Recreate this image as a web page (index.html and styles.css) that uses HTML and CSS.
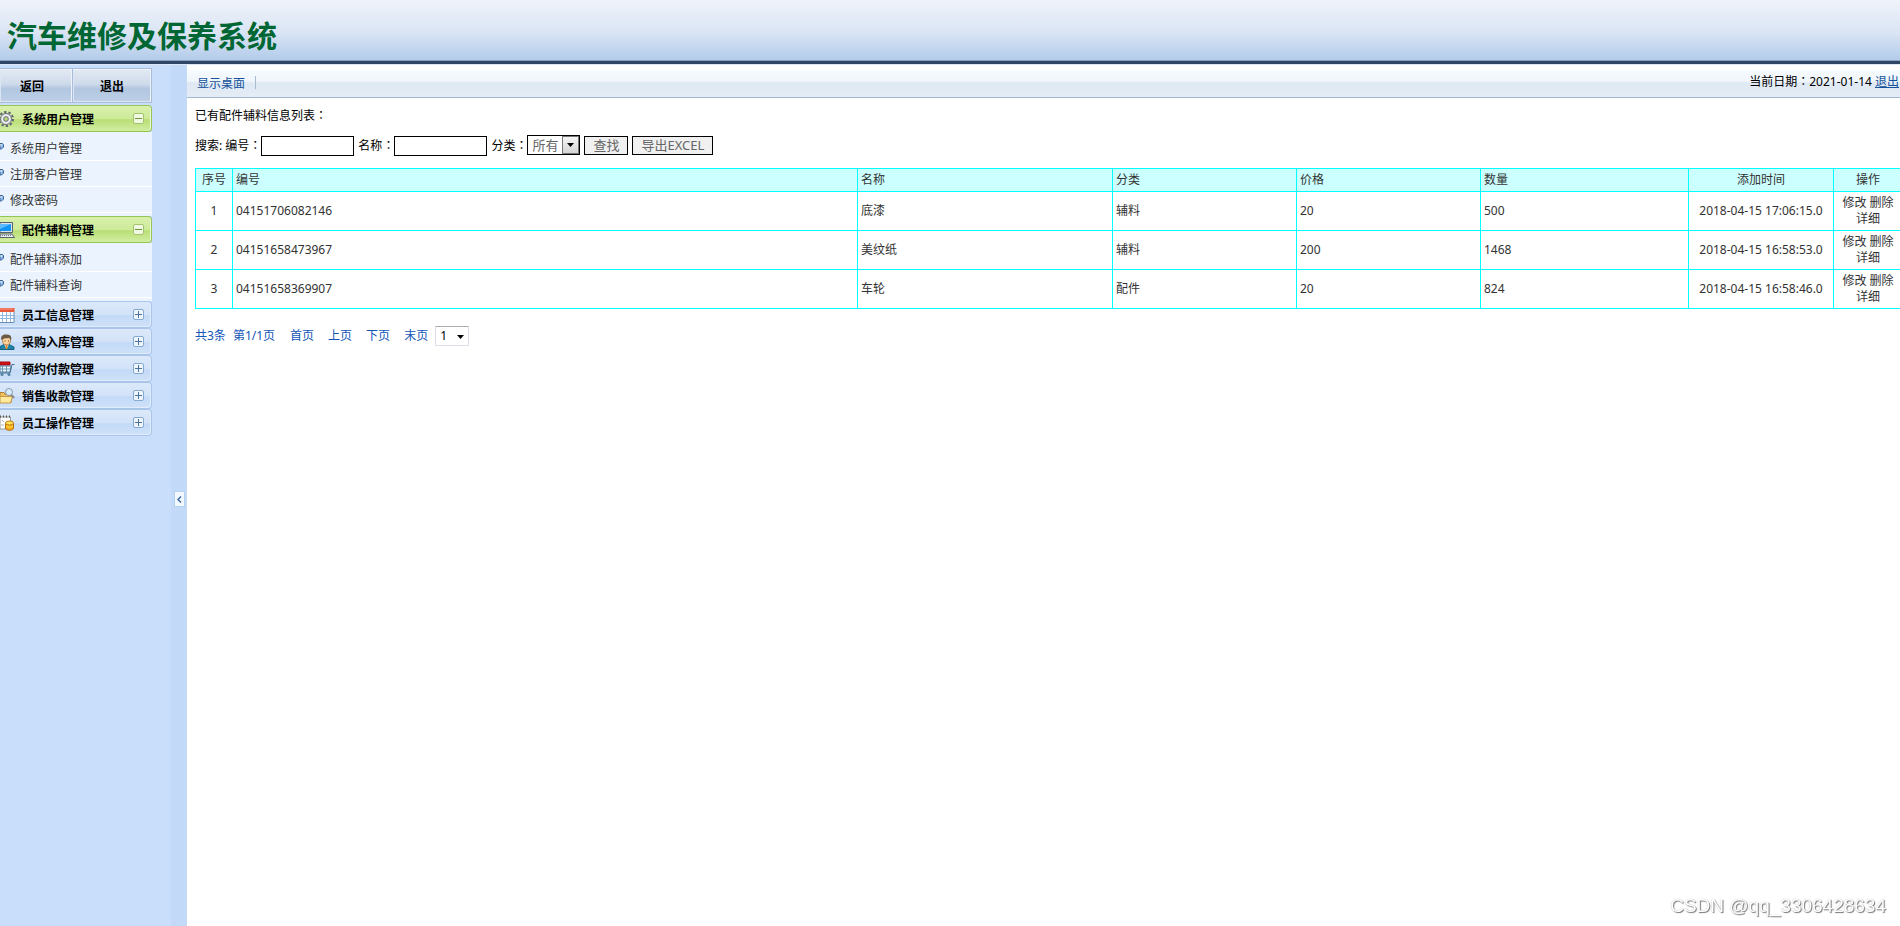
FILE: index.html
```html
<!DOCTYPE html>
<html lang="zh-CN">
<head>
<meta charset="utf-8">
<title>汽车维修及保养系统</title>
<link rel="stylesheet" href="styles.css">
</head>
<body>
<svg class="defs" aria-hidden="true">
  <symbol id="minus" viewBox="0 0 11 11"><rect x=".5" y=".5" width="10" height="10" rx="1.5" fill="#f2f9e2" stroke="#a3c46c"/><path d="M2 5.5h7" stroke="#6f9440"/></symbol>
  <symbol id="plus" viewBox="0 0 11 11"><rect x=".5" y=".5" width="10" height="10" rx="1.5" fill="#eef5fd" stroke="#86a9d0"/><path d="M2 5.5h7M5.5 2v7" stroke="#4d7299"/></symbol>
  <symbol id="bullet" viewBox="0 0 4 7"><path d="M0 .5h2.500l1 1v2.500l-2 2H0z" fill="#8fb8ee" stroke="#3c6493"/><path d="M0 2h2" stroke="#fff"/></symbol>
</svg>
<header class="banner"><h1 class="banner-title">汽车维修及保养系统</h1></header>
<div class="layout">
  <aside class="sidebar">
    <div class="top-buttons">
      <button class="top-button" type="button">返回</button>
      <button class="top-button" type="button">退出</button>
    </div>
    <nav class="menu">
      <section class="group open">
        <button class="group-head" type="button">
          <svg class="group-icon" viewBox="0 0 15 16"><circle cx="6" cy="8" r="7" fill="none" stroke="#62666e" stroke-width="2" stroke-dasharray="2.400 2"/><circle cx="6" cy="8" r="5.500" fill="#d9dce1" stroke="#6d717a"/><circle cx="6" cy="8" r="4" fill="none" stroke="#f4f5f7"/><circle cx="6" cy="8" r="2.300" fill="#b9dd79" stroke="#6c7078"/></svg>
          <span class="group-name">系统用户管理</span><svg class="toggle"><use href="#minus"/></svg>
        </button>
        <ul class="items">
          <li><a href="#"><svg class="bullet"><use href="#bullet"/></svg>系统用户管理</a></li>
          <li><a href="#"><svg class="bullet"><use href="#bullet"/></svg>注册客户管理</a></li>
          <li><a href="#"><svg class="bullet"><use href="#bullet"/></svg>修改密码</a></li>
        </ul>
      </section>
      <section class="group open">
        <button class="group-head" type="button">
          <svg class="group-icon" viewBox="0 0 15 16"><path d="M0 .5h12.500v10H0z" fill="#dfe3ea" stroke="#566273"/><path d="M0 2h11v7H0z" fill="#1294f5"/><path d="M0 2h11L0 7z" fill="#5cbcff"/><path d="M0 12h12l2.500 3.500H0z" fill="#e8ebf0" stroke="#59626e"/><path d="M0 13.500h12" stroke="#77818e" stroke-dasharray="1 1"/></svg>
          <span class="group-name">配件辅料管理</span><svg class="toggle"><use href="#minus"/></svg>
        </button>
        <ul class="items">
          <li><a href="#"><svg class="bullet"><use href="#bullet"/></svg>配件辅料添加</a></li>
          <li><a href="#"><svg class="bullet"><use href="#bullet"/></svg>配件辅料查询</a></li>
        </ul>
      </section>
      <section class="group">
        <button class="group-head" type="button">
          <svg class="group-icon" viewBox="0 0 15 16"><path d="M0 1h14v14H0z" fill="#fff"/><path d="M0 1h14.500v4H0z" fill="#e8583c"/><path d="M0 2h13" stroke="#f79a82"/><path d="M0 8.500h14M0 11.500h14M2.500 5v10M6.500 5v10M10.500 5v10" stroke="#91b9e2"/><path d="M14 5v10.500H0" fill="none" stroke="#6b8db4"/></svg>
          <span class="group-name">员工信息管理</span><svg class="toggle"><use href="#plus"/></svg>
        </button>
      </section>
      <section class="group">
        <button class="group-head" type="button">
          <svg class="group-icon" viewBox="0 0 15 16"><path d="M0 15.500v-3l4-2h5l5 2.500v2.500z" fill="#1e83a8" stroke="#176280"/><path d="M4 10l2.500 5L9 10z" fill="#fff"/><path d="M6.500 11v4" stroke="#e28a28" stroke-width="2"/><ellipse cx="6.500" cy="6.500" rx="4" ry="4.500" fill="#ffd49b" stroke="#b77f43"/><path d="M1.500 6C0 1 4 0 7 .5c4 0 5 3 4 6L9.500 4 4 4.500z" fill="#6a5a46"/><path d="M4.500 7h1M8 7h1" stroke="#543"/></svg>
          <span class="group-name">采购入库管理</span><svg class="toggle"><use href="#plus"/></svg>
        </button>
      </section>
      <section class="group">
        <button class="group-head" type="button">
          <svg class="group-icon" viewBox="0 0 15 16"><path d="M0 1h10v3H0z" fill="#d90d17" stroke="#a40c12"/><path d="M0 5h11l-1 6H0z" fill="#f3f8fc" stroke="#527fa2"/><path d="M0 8h10M2.500 5v6M6.500 5v6" stroke="#6795b5"/><path d="M14.500 3.500H12L10 12H0" fill="none" stroke="#476f91"/><circle cx="2" cy="13.500" r="1.500" fill="#5482a5"/><circle cx="9" cy="13.500" r="1.500" fill="#5482a5"/></svg>
          <span class="group-name">预约付款管理</span><svg class="toggle"><use href="#plus"/></svg>
        </button>
      </section>
      <section class="group">
        <button class="group-head" type="button">
          <svg class="group-icon" viewBox="0 0 15 16"><path d="M0 4.500h4l1 2h6v8H0z" fill="#f2c363" stroke="#b28031"/><path d="M0 8.500h12.500l-2 6.500H0z" fill="#ffe99c" stroke="#c79742"/><circle cx="9" cy="4" r="3.500" fill="#d7edfb" stroke="#8599ab"/><path d="M11.500 7l2.500 3" stroke="#8c8a88" stroke-width="2"/></svg>
          <span class="group-name">销售收款管理</span><svg class="toggle"><use href="#plus"/></svg>
        </button>
      </section>
      <section class="group">
        <button class="group-head" type="button">
          <svg class="group-icon" viewBox="0 0 15 16"><path d="M0 2h10.500v12H0z" fill="#fff" stroke="#999"/><path d="M0 1.500h11" stroke="#555" stroke-width="2" stroke-dasharray="1 2"/><path d="M2 5l2 2M1 10h3" stroke="#b3b3b3"/><path d="M5.500 8v5c0 3 8 3 8 0V8z" fill="#f6ac16" stroke="#b86d0c"/><ellipse cx="9.500" cy="8" rx="4" ry="2" fill="#ffe357" stroke="#c27b12"/><path d="M6 11c2 1.500 5 1.500 7 0" fill="none" stroke="#ffe357"/></svg>
          <span class="group-name">员工操作管理</span><svg class="toggle"><use href="#plus"/></svg>
        </button>
      </section>
    </nav>
  </aside>
  <div class="splitter">
    <button class="collapse" type="button" aria-label="收起"><svg viewBox="0 0 5 7"><path d="M4 .5l-3 3 3 3" fill="none" stroke="#3c6a9c" stroke-width="1.500"/></svg></button>
  </div>
  <main class="main">
    <div class="toolbar">
      <a class="desktop" href="#">显示桌面</a>
      <div class="session">当前日期<span class="colon" lang="zh-TW">：</span>2021-01-14 <a class="logout" href="#">退出</a></div>
    </div>
    <div class="content">
      <p class="caption">已有配件辅料信息列表<span class="colon" lang="zh-TW">：</span></p>
      <form class="search">
        <label for="code">搜索: 编号<span class="colon" lang="zh-TW">：</span></label><input class="field" id="code" type="text">
        <label class="next" for="name">名称<span class="colon" lang="zh-TW">：</span></label><input class="field" id="name" type="text">
        <label class="next" for="kind">分类<span class="colon" lang="zh-TW">：</span></label>
        <span class="kind"><select id="kind"><option>所有</option></select><span class="drop"><svg viewBox="0 0 7 4"><path d="M0 0h7L3.500 4z"/></svg></span></span>
        <button class="action" type="button">查找</button>
        <button class="action" type="button">导出EXCEL</button>
      </form>
      <table class="parts">
        <colgroup><col class="c-no"><col><col class="c-name"><col class="c-mid"><col class="c-mid"><col class="c-qty"><col class="c-time"><col class="c-ops"></colgroup>
        <thead><tr><th class="mid">序号</th><th>编号</th><th>名称</th><th>分类</th><th>价格</th><th>数量</th><th class="mid">添加时间</th><th class="mid">操作</th></tr></thead>
        <tbody>
          <tr><td class="mid">1</td><td>04151706082146</td><td>底漆</td><td>辅料</td><td>20</td><td>500</td><td class="mid">2018-04-15 17:06:15.0</td><td class="mid"><a href="#">修改</a> <a href="#">删除</a> <a href="#">详细</a></td></tr>
          <tr><td class="mid">2</td><td>04151658473967</td><td>美纹纸</td><td>辅料</td><td>200</td><td>1468</td><td class="mid">2018-04-15 16:58:53.0</td><td class="mid"><a href="#">修改</a> <a href="#">删除</a> <a href="#">详细</a></td></tr>
          <tr><td class="mid">3</td><td>04151658369907</td><td>车轮</td><td>配件</td><td>20</td><td>824</td><td class="mid">2018-04-15 16:58:46.0</td><td class="mid"><a href="#">修改</a> <a href="#">删除</a> <a href="#">详细</a></td></tr>
        </tbody>
      </table>
      <div class="pager">
        <span class="total">共3条</span><span>第1/1页</span>
        <a href="#">首页</a><a href="#">上页</a><a href="#">下页</a><a href="#">末页</a>
        <span class="jump"><select aria-label="页码"><option>1</option></select><svg viewBox="0 0 7 4"><path d="M0 0h7L3.500 4z"/></svg></span>
      </div>
    </div>
  </main>
</div>
<div class="watermark">CSDN @qq_3306428634</div>
</body>
</html>
```
FILE: styles.css
```css
* { box-sizing: border-box; }
body {
  margin: 0;
  height: 100vh;
  display: flex;
  flex-direction: column;
  overflow: hidden;
  background: #fff;
  color: #000;
  font: 12px/16px "Noto Sans", "Noto Sans CJK SC", sans-serif;
}
button, input, select { font: inherit; margin: 0; border-radius: 0; }
a { color: inherit; text-decoration: none; }
.defs { display: none; }

.banner {
  flex: none;
  height: 65px;
  padding: 16px 7px 0;
  background: linear-gradient(#eff3fa, #dbe5f5 50%, #adc8e8);
  border-bottom: 1px solid #dbe7f7;
  box-shadow: inset 0 -3px #2f4566, inset 0 -4px #8aa0be;
}
.banner-title { margin: 0; font-size: 30px; line-height: 40px; color: #063; }

.layout { flex: 1; display: flex; min-height: 0; }
.sidebar { flex: none; width: 171px; padding: 3px 19px 0 0; background: #c9defa; }
.top-buttons { display: grid; grid-template-columns: 73px 1fr; height: 35px; }
.top-button {
  padding: 3px 0 0;
  border: 1px solid #a9bdd8;
  border-left: 0;
  box-shadow: inset -1px 1px #eef3fa, inset 1px -1px #dce6f3;
  background: linear-gradient(#e3eaf4, #cfdbeb 45%, #b1c6e1 60%, #bfd0e7);
  font-weight: bold;
}
.top-button:first-child { padding-right: 8px; }
.menu { padding-top: 2px; }
.group-head {
  display: flex;
  align-items: center;
  width: 100%;
  height: 27px;
  padding: 2px 7px 0 0;
  border: 1px solid #a9c6ea;
  border-left: 0;
  border-radius: 0 4px 4px 0;
  background: linear-gradient(#dce9fa, #d2e2f8 50%, #c3daf7 55%, #cfe1f9);
  box-shadow: inset -1px -1px #e0ecfb;
  font-weight: bold;
  text-align: left;
}
.open .group-head {
  border-color: #95c553;
  background: linear-gradient(#d9f0ad, #cdeb99 50%, #b9de75 55%, #d2eea2);
  box-shadow: inset -1px 0 #edf8d6;
}
.group-icon { flex: none; width: 15px; height: 16px; margin: 0 7px 2px 0; }
.group-name { flex: 1; }
.toggle { width: 11px; height: 11px; margin-bottom: 2px; }
.items { margin: 0; padding: 3px 0; list-style: none; background: #eaf3fe; }
.items a {
  display: flex;
  align-items: center;
  gap: 6px;
  height: 26px;
  padding-top: 2px;
  border-bottom: 1px solid #fff;
  color: #333;
}
.bullet { width: 4px; height: 7px; margin-bottom: 4px; }

.splitter { flex: none; display: flex; align-items: center; justify-content: flex-end; width: 16px; padding-right: 2px; background: #c3d9f8; }
.collapse {
  display: flex;
  align-items: center;
  justify-content: center;
  width: 11px;
  height: 16px;
  margin-top: 7px;
  padding: 0;
  border: 1px solid #b5cfee;
  background: #f3f8fe;
}
.collapse svg { width: 5px; height: 7px; }

.main { flex: 1; min-width: 0; overflow: hidden; }
.toolbar {
  display: flex;
  justify-content: space-between;
  height: 33px;
  padding: 9px 1px 0 10px;
  border-bottom: 1px solid #9fb6ce;
  background: linear-gradient(#fff 0 4px, #f5fafe 6px, #f0f6fc 16px, #dfe9f4 18px, #e4ecf5);
}
.desktop { height: 20px; padding: 2px 11px 0 0; color: #15529b; position: relative; }
.desktop::after { content: ""; position: absolute; right: 0; top: 2px; height: 13px; border-right: 1px solid #a9bccf; }
.logout { color: #15529b; text-decoration: underline; }
.colon { font-family: "Noto Sans CJK TC", sans-serif; line-height: 1; }

.content { padding: 10px 0 0 8px; }
.caption { margin: 0; height: 16px; }
.search { display: flex; align-items: center; height: 20px; margin: 12px 0; }
.next { margin-left: 4px; }
.field { width: 93px; height: 20px; padding: 0 2px; border: 1px solid #000; background: #fff; }
.kind { display: flex; width: 53px; height: 20px; margin: 0 4px 2px 0; border: 1px solid #000; }
.kind select { appearance: none; width: 34px; padding: 0 0 0 4px; border: 0; background: #fff; color: #666; font-size: 13px; }
.drop { flex: 1; display: flex; align-items: center; justify-content: center; border: 1px solid #777; background: linear-gradient(#f5f5f5, #d5d5d5); }
.drop svg, .jump svg { width: 7px; height: 4px; }
.action { height: 19px; margin: 0 4px 1px 0; padding: 0 8px; border: 1px solid #000; background: #f0f0f0; color: #666; font-size: 13px; line-height: 17px; }

.parts { width: calc(100% + 3px); table-layout: fixed; border-collapse: collapse; color: #333; }
.c-no { width: 37px; }
.c-name { width: 255px; }
.c-mid { width: 184px; }
.c-qty { width: 208px; }
.c-time { width: 145px; }
.c-ops { width: 69px; }
.parts th, .parts td { border: 1px solid #0ff; padding: 3px; text-align: left; font-weight: normal; }
.parts th { background: #cff; }
.parts .mid { text-align: center; }
.parts td { height: 39px; }

.pager { display: flex; align-items: center; gap: 14px; margin-top: 17px; color: #1254b8; }
.total { margin-right: -7px; }
.total + span { margin-right: 1px; }
.jump { position: relative; width: 34px; height: 20px; margin-left: -7px; }
.jump select { appearance: none; width: 100%; height: 100%; padding: 0 4px; border: 1px solid #dcdfe8; border-top-color: #abadb3; background: #fff; color: #000; }
.jump svg { position: absolute; right: 5px; top: 9px; pointer-events: none; }

.watermark {
  position: fixed;
  right: 14px;
  bottom: 10px;
  color: #fff;
  font: 19px/20px "Liberation Sans", sans-serif;
  text-shadow: 1px 1px 1px #777, 0 0 1px #aaa;
}
```
